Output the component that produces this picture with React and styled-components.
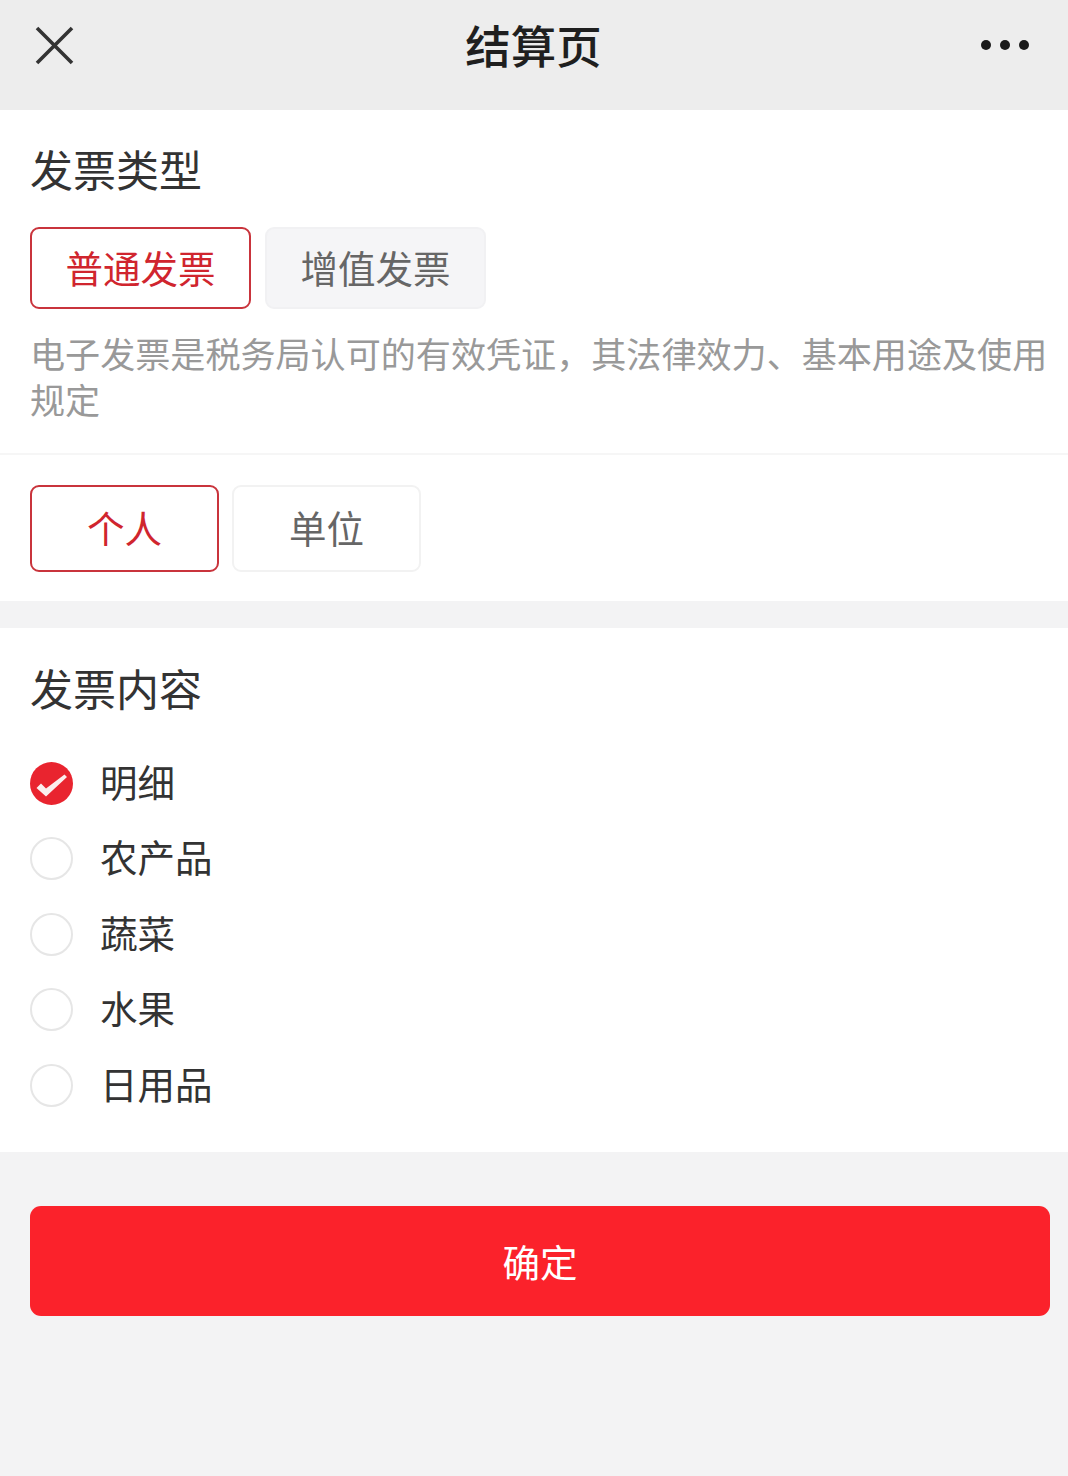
import React from 'react';
import styled, { createGlobalStyle } from 'styled-components';

const GlobalStyle = createGlobalStyle`
  html, body {
    margin: 0;
    padding: 0;
    background: #f3f3f4;
  }
  * {
    box-sizing: border-box;
  }
`;

const Page = styled.div`
  width: 1068px;
  height: 1476px;
  overflow: hidden;
  background: #f3f3f4;
  font-family: "Noto Sans CJK SC", "Liberation Sans", sans-serif;
  color: #333;
`;

const Header = styled.header`
  height: 110px;
  background: #ededed;
  display: flex;
  align-items: center;
  justify-content: space-between;
  padding: 0 39px 20px 35px;
`;

const CloseIcon = styled.svg`
  width: 39px;
  height: 39px;
  margin-right: 12px;
  display: block;
`;

const HeaderTitle = styled.h1`
  margin: -2px 0 0;
  font-size: 45.5px;
  font-weight: 500;
  line-height: 50px;
  color: #1f1f1f;
`;

const Dots = styled.div`
  display: flex;
  gap: 9px;
`;

const Dot = styled.span`
  width: 10px;
  height: 10px;
  border-radius: 50%;
  background: #1a1a1a;
`;

const Card = styled.section`
  background: #fff;
`;

const TypeBlock = styled.div`
  padding: 32px 20px 31px 30px;
  border-bottom: 2px solid #f6f6f6;
`;

const SectionTitle = styled.h2`
  margin: 0;
  font-size: 43px;
  font-weight: 400;
  line-height: 52px;
  color: #333;
`;

const ButtonRow = styled.div`
  display: flex;
  gap: ${(p) => p.$gap}px;
  margin-top: ${(p) => p.$top || 0}px;
`;

const Choice = styled.div`
  width: ${(p) => p.$width}px;
  height: ${(p) => p.$height}px;
  padding-bottom: 4px;
  display: flex;
  align-items: center;
  justify-content: center;
  font-size: 37.5px;
  border-radius: 9px;
  border: 2px solid ${(p) => (p.$active ? '#c9343c' : p.$filled ? '#f1f1f3' : '#f2f2f2')};
  background: ${(p) => (p.$filled ? '#f5f5f7' : '#fff')};
  color: ${(p) => (p.$active ? '#d0252e' : '#666')};
`;

const Description = styled.p`
  margin: 21px 0 0;
  font-size: 35.1px;
  line-height: 46px;
  color: #999;
`;

const PartyBlock = styled.div`
  padding: 30px 30px 29px;
`;

const ContentCard = styled(Card)`
  margin-top: 27px;
  padding: 33px 30px 29px;
  height: 524px;
`;

const OptionList = styled.div`
  margin-top: 32.5px;
  display: flex;
  flex-direction: column;
`;

const Option = styled.div`
  height: 75.5px;
  display: flex;
  align-items: center;
  gap: 27px;
  font-size: 37.5px;
  color: #333;
`;

const OptionLabel = styled.span`
  margin-top: -6px;
`;

const Radio = styled.span`
  width: 43px;
  height: 43px;
  flex: none;
  border-radius: 50%;
  border: 2px solid #e6e6e6;
  background: #fff;
`;

const CheckedRadio = styled.svg`
  width: 43px;
  height: 43px;
  flex: none;
  display: block;
`;

const ConfirmButton = styled.button`
  display: block;
  width: 1020px;
  height: 110px;
  margin: 54px 0 0 30px;
  padding: 0 0 2px;
  border: none;
  border-radius: 11px;
  background: #fb222b;
  color: #fff;
  font-family: inherit;
  font-size: 37.5px;
`;

const options = ['明细', '农产品', '蔬菜', '水果', '日用品'];

export default function App() {
  return (
    <Page>
      <GlobalStyle />
      <Header>
        <CloseIcon viewBox="0 0 39 39" fill="none">
          <path d="M2 2 L37 37 M37 2 L2 37" stroke="#333" strokeWidth="3.6" />
        </CloseIcon>
        <HeaderTitle>结算页</HeaderTitle>
        <Dots>
          <Dot />
          <Dot />
          <Dot />
        </Dots>
      </Header>
      <Card>
        <TypeBlock>
          <SectionTitle>发票类型</SectionTitle>
          <ButtonRow $gap={14} $top={33}>
            <Choice $active $width={221} $height={82}>普通发票</Choice>
            <Choice $filled $width={221} $height={82}>增值发票</Choice>
          </ButtonRow>
          <Description>电子发票是税务局认可的有效凭证，其法律效力、基本用途及使用规定</Description>
        </TypeBlock>
        <PartyBlock>
          <ButtonRow $gap={13}>
            <Choice $active $width={189} $height={87}>个人</Choice>
            <Choice $width={189} $height={87}>单位</Choice>
          </ButtonRow>
        </PartyBlock>
      </Card>
      <ContentCard>
        <SectionTitle>发票内容</SectionTitle>
        <OptionList>
          {options.map((label, i) => (
            <Option key={label}>
              {i === 0 ? (
                <CheckedRadio viewBox="0 0 43 43">
                  <circle cx="21.5" cy="21.5" r="21.5" fill="#e9242f" />
                  <path d="M6.5 26 L11 21.5 L16 26.5 L34.5 12.5 L37 15 L16 34.5 Z" fill="#fbeeee" />
                </CheckedRadio>
              ) : (
                <Radio />
              )}
              <OptionLabel>{label}</OptionLabel>
            </Option>
          ))}
        </OptionList>
      </ContentCard>
      <ConfirmButton>确定</ConfirmButton>
    </Page>
  );
}
